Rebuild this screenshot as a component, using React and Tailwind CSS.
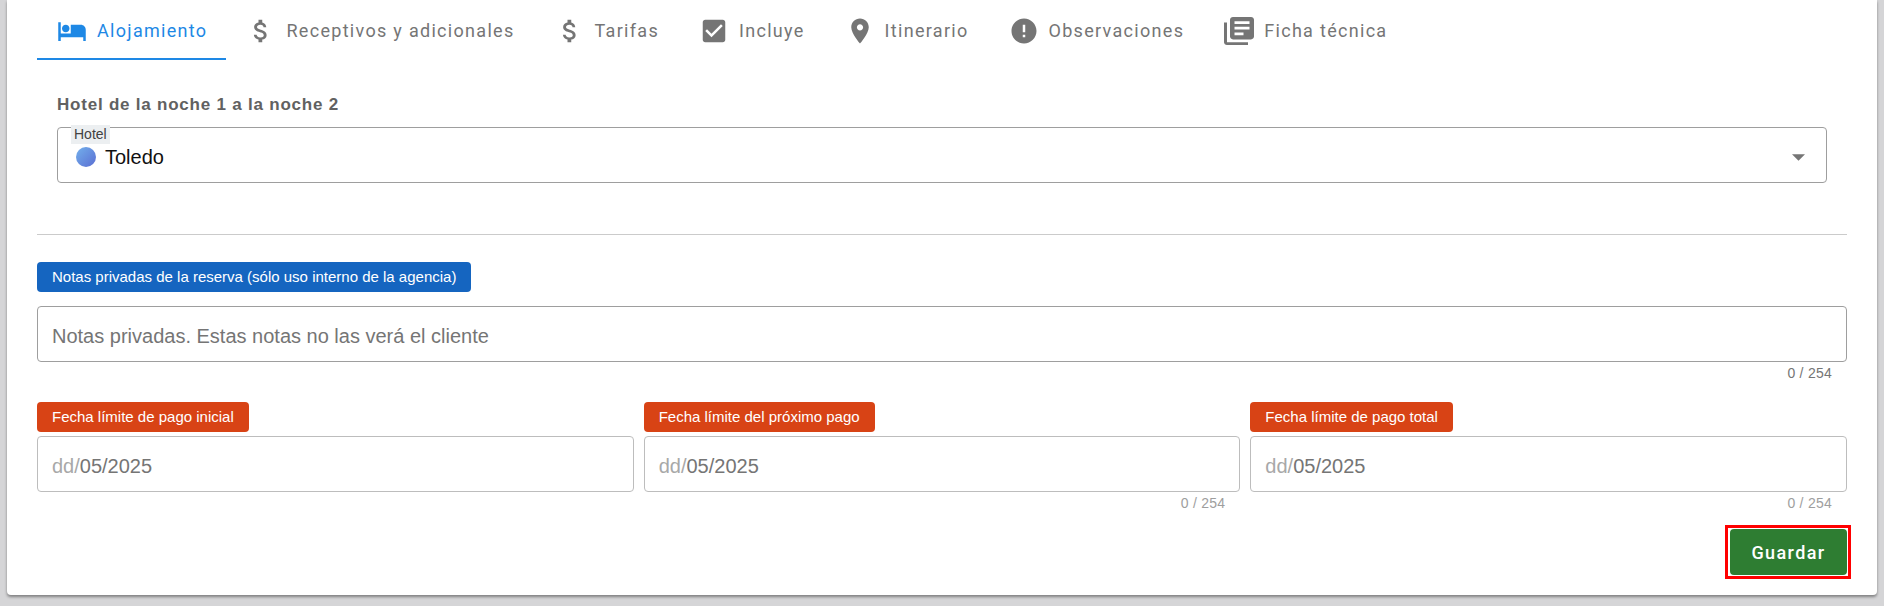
const P = {
  bed: "M7 13c1.66 0 3-1.34 3-3S8.66 7 7 7s-3 1.34-3 3 1.34 3 3 3zm12-6h-8v7H3V5H1v15h2v-3h18v3h2v-9c0-2.21-1.79-4-4-4z",
  money: "M11.8 10.9c-2.27-.59-3-1.2-3-2.15 0-1.09 1.01-1.85 2.7-1.85 1.78 0 2.44.85 2.5 2.1h2.21c-.07-1.72-1.12-3.3-3.21-3.81V3h-3v2.16c-1.94.42-3.5 1.68-3.5 3.61 0 2.31 1.91 3.46 4.7 4.13 2.5.6 3 1.48 3 2.41 0 .69-.49 1.79-2.7 1.79-2.06 0-2.87-.92-2.98-2.1h-2.2c.12 2.19 1.76 3.42 3.68 3.83V21h3v-2.15c1.95-.37 3.5-1.5 3.5-3.55 0-2.84-2.43-3.81-4.7-4.4z",
  check: "M19 3H5c-1.11 0-2 .9-2 2v14c0 1.1.89 2 2 2h14c1.11 0 2-.9 2-2V5c0-1.1-.89-2-2-2zm-9 14l-5-5 1.41-1.41L10 14.17l7.59-7.59L19 8l-9 9z",
  pin: "M12 2C8.13 2 5 5.13 5 9c0 5.25 7 13 7 13s7-7.75 7-13c0-3.87-3.13-7-7-7zm0 9.5c-1.38 0-2.5-1.12-2.5-2.5s1.12-2.5 2.5-2.5 2.5 1.12 2.5 2.5-1.12 2.5-2.5 2.5z",
  error: "M12 2C6.48 2 2 6.48 2 12s4.48 10 10 10 10-4.48 10-10S17.52 2 12 2zm1 15h-2v-2h2v2zm0-4h-2V7h2v6z",
  book: "M4 6H2v14c0 1.1.9 2 2 2h14v-2H4V6zm16-4H8c-1.1 0-2 .9-2 2v12c0 1.1.9 2 2 2h12c1.1 0 2-.9 2-2V4c0-1.1-.9-2-2-2zm-1 9H9V9h10v2zm-4 4H9v-2h6v2zm4-8H9V5h10v2z",
};

const tabs = [
  ["bed", "Alojamiento"],
  ["money", "Receptivos y adicionales"],
  ["money", "Tarifas"],
  ["check", "Incluye"],
  ["pin", "Itinerario"],
  ["error", "Observaciones"],
  ["book", "Ficha técnica"],
];

function Tab({ icon, label, active }) {
  return (
    <div
      className={
        "flex h-[60px] items-center gap-[10px] pl-[20px] pt-[3px] " +
        (active ? "border-b-2 border-[#1e88e5] pr-[19px] text-[#1e88e5]" : "pb-[2px] pr-[20px] text-[#757575]")
      }
    >
      {icon === "book" ? (
        <svg width="30" height="28" viewBox="2 2 20 20" preserveAspectRatio="none" fill="currentColor" className="shrink-0">
          <path d={P[icon]} />
        </svg>
      ) : (
        <svg width="30" height="30" viewBox="0 0 24 24" fill="currentColor" className="shrink-0">
          <path d={P[icon]} />
        </svg>
      )}
      <span className="font-['Roboto',sans-serif] text-[18px] tracking-[1.3px] whitespace-nowrap">{label}</span>
    </div>
  );
}

function DateField({ label, counter }) {
  return (
    <div className="flex flex-col items-start">
      <div className="flex h-[30px] items-center rounded-[4px] bg-[#d84315] px-[15px] text-[15px] text-white whitespace-nowrap">{label}</div>
      <div className="mt-[4px] flex h-[56px] w-full items-center rounded-[4px] border border-[#bdbdbd] px-[14px] pt-[3px] text-[20px] text-[#757575]">
        <span className="text-[#a8a8a8]">dd/</span>05/2025
      </div>
      <div className="h-[22px] w-full pr-[15px] text-right text-[14px] leading-[22px] tracking-[0.25px] text-[#9e9e9e]">{counter ? "0 / 254" : ""}</div>
    </div>
  );
}

export default function App() {
  return (
    <div className="h-[606px] overflow-hidden bg-[#d5d5d7] pl-[7px] font-['Liberation_Sans',Arial,sans-serif]">
      <div className="flex h-[595px] w-[1870px] flex-col rounded-b-[4px] bg-white px-[30px] shadow-[0_2px_3px_rgba(0,0,0,0.4)]">
        <div className="flex">
          {tabs.map(([icon, label], i) => (
            <Tab key={label} icon={icon} label={label} active={i === 0} />
          ))}
        </div>

        <div className="ml-[20px] mr-[21px] mt-[35px] text-[17px] font-bold leading-[20px] tracking-[0.78px] text-[#616161]">
          Hotel de la noche 1 a la noche 2
        </div>

        <div className="relative ml-[20px] mr-[20px] mt-[12px] flex h-[56px] items-center rounded-[4px] border border-[#9e9e9e] pl-[18px] pr-[21px] pt-[4px]">
          <span className="absolute left-[13px] top-[-3px] bg-[#eceff1] px-[3px] text-[14px] leading-[19px] text-[#424242]">Hotel</span>
          <span className="h-[20px] w-[20px] rounded-full bg-[linear-gradient(135deg,#73b0ec,#5a6ed2)]"></span>
          <span className="ml-[9px] text-[20px] text-[#111]">Toledo</span>
          <svg width="13" height="7" viewBox="0 0 14 7" className="ml-auto" fill="#757575">
            <path d="M0 0h14L7 7z" />
          </svg>
        </div>

        <div className="mt-[51px] h-px bg-[#cbcbcb]"></div>

        <div className="mt-[27px] flex h-[30px] w-fit items-center rounded-[4px] bg-[#1565c0] px-[15px] text-[15px] text-white whitespace-nowrap">
          Notas privadas de la reserva (sólo uso interno de la agencia)
        </div>
        <div className="mt-[14px] flex h-[56px] items-center rounded-[4px] border border-[#9e9e9e] px-[14px] pt-[3px] text-[20px] text-[#757575]">
          Notas privadas. Estas notas no las verá el cliente
        </div>
        <div className="h-[22px] pr-[15px] text-right text-[14px] leading-[22px] tracking-[0.25px] text-[#757575]">0 / 254</div>

        <div className="mt-[18px] grid grid-cols-3 gap-[10px]">
          <DateField label="Fecha límite de pago inicial" />
          <DateField label="Fecha límite del próximo pago" counter />
          <DateField label="Fecha límite de pago total" counter />
        </div>

        <div className="mr-[-4px] mt-[11px] self-end border-[3px] border-[#ff0000] p-[1px] pl-[2px]">
          <div className="flex h-[46px] w-[117px] items-center justify-center rounded-[4px] bg-[#2e7d32] font-['Roboto',sans-serif] text-[18px] font-medium tracking-[1.4px] text-white">
            Guardar
          </div>
        </div>
      </div>
    </div>
  );
}
